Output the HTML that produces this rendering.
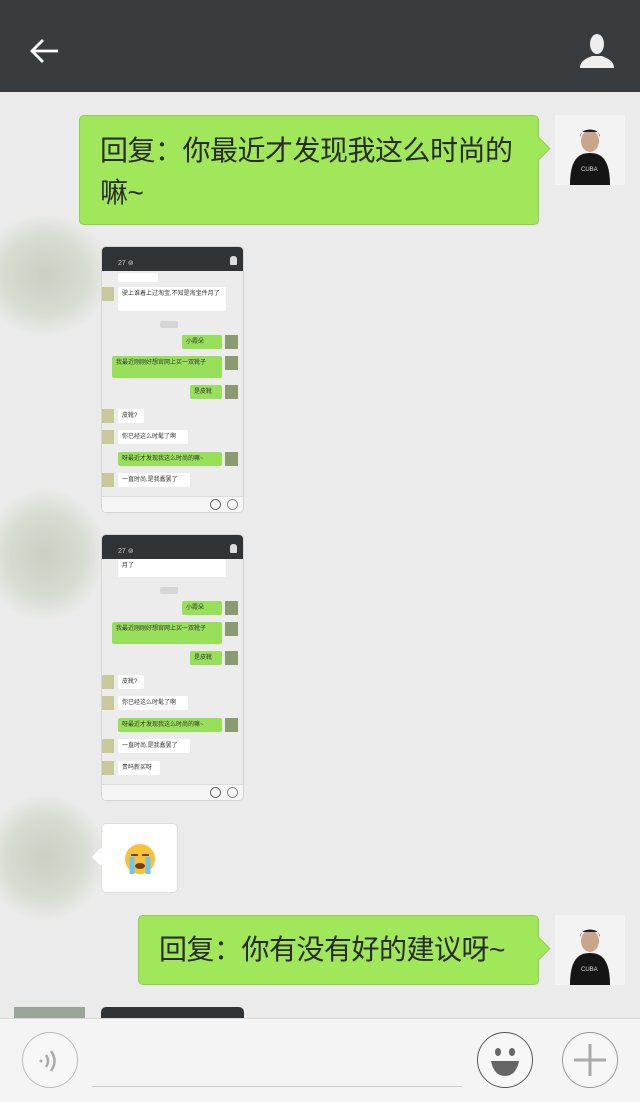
<!DOCTYPE html>
<html><head><meta charset="utf-8"><style>
*{margin:0;padding:0;box-sizing:border-box}
body{width:640px;height:1102px;overflow:hidden;background:#ebebeb;position:relative;font-family:"Liberation Sans","Noto Sans CJK SC",sans-serif}
.abs{position:absolute}
.hdr{left:0;top:0;width:640px;height:92px;background:#383c3f}
.bub{background:#a0e75a;border:1px solid #8ccf4d;border-radius:5px;color:#2a2a2a;font-size:28px;line-height:42px;letter-spacing:-0.5px}
.bub:after{content:"";position:absolute;right:-9px;top:24px;width:16px;height:16px;background:#a0e75a;border-right:1px solid #8ccf4d;border-top:1px solid #8ccf4d;transform:rotate(45deg)}
.av{width:70px;height:70px;background:#f3f3f3}
.blob{background:radial-gradient(ellipse at center,#c9d1c2 0%,#d6dcd0 45%,rgba(235,235,235,0) 72%)}
.ph{width:143px;height:267px;background:#ececec;border:1px solid #d5d5d5;border-radius:5px;overflow:hidden;font-size:6px;color:#333}
.ph .top{position:absolute;left:0;top:0;width:100%;height:24px;background:#303437}
.ph .r{position:absolute;height:14px;line-height:14px;padding:0 4px;border-radius:2px}
.ph .g{background:#98e05a}.ph .w{background:#fff}
.ph .a{position:absolute;width:13px;height:14px;background:#8c9a72}
.ph .al{position:absolute;left:0;width:12px;height:14px;background:#c7c99a}
.ph .bot{position:absolute;left:0;bottom:0;width:100%;height:16px;background:#f5f5f5;border-top:1px solid #ddd}
.circ{position:absolute;border-radius:50%;border:1.5px solid #aaa;background:#f7f7f7}
</style></head><body>
<div class="abs hdr"></div>
<svg class="abs" style="left:28px;top:37px" width="32" height="28" viewBox="0 0 32 28"><path d="M30 14H4M15 3L4 14l11 11" stroke="#fff" stroke-width="2.8" fill="none"/></svg>
<svg class="abs" style="left:578px;top:32px" width="38" height="38" viewBox="0 0 38 38"><ellipse cx="19" cy="12" rx="7" ry="10" fill="#eee"/><path d="M2 36c0-8 8-10 12-12h10c4 2 12 4 12 12z" fill="#eee"/></svg>

<div class="abs blob" style="left:-20px;top:215px;width:130px;height:120px"></div>
<div class="abs blob" style="left:-15px;top:490px;width:120px;height:130px"></div>
<div class="abs blob" style="left:-15px;top:795px;width:120px;height:125px"></div>

<div class="abs bub" style="left:79px;top:115px;width:460px;height:110px;padding:14px 12px 0 20px">回复：你最近才发现我这么时尚的<br>嘛~</div>
<div class="abs av" style="left:555px;top:115px"><svg width="70" height="70"><ellipse cx="35" cy="26" rx="9" ry="11" fill="#caa58c"/><path d="M25 22c0-10 20-10 20 0l-2-5h-16z" fill="#222"/><path d="M15 70c0-25 8-32 20-32s20 7 20 32z" fill="#151515"/><text x="26" y="56" font-size="6" fill="#ddd" font-family="Liberation Sans">CUBA</text></svg></div>

<div class="abs ph" style="left:101px;top:246px">
<div class="top"><span style="position:absolute;left:16px;top:12px;color:#ccc;font-size:7px">27 ⊚</span><span style="position:absolute;right:6px;top:9px;width:7px;height:9px;background:#ddd;border-radius:3px 3px 1px 1px"></span></div>
<div class="r w" style="left:16px;top:26px;width:40px;height:9px"></div>
<div class="al" style="top:40px"></div><div class="r w" style="left:16px;top:40px;width:108px;height:24px;line-height:11px;padding-top:2px">驶上谁着上过淘宝,不知是淘宝件月了</div>
<div class="r" style="left:58px;top:74px;width:18px;height:7px;background:#d5d5d5"></div>
<div class="a" style="left:123px;top:88px"></div><div class="r g" style="left:80px;top:88px;width:40px">小霞朵</div>
<div class="a" style="left:123px;top:109px"></div><div class="r g" style="left:10px;top:109px;width:110px;height:22px">我最近刚刚好想官网上买一双靴子</div>
<div class="a" style="left:123px;top:138px"></div><div class="r g" style="left:88px;top:138px;width:32px">是皮靴</div>
<div class="al" style="top:162px"></div><div class="r w" style="left:16px;top:162px;width:26px">皮靴?</div>
<div class="al" style="top:183px"></div><div class="r w" style="left:16px;top:183px;width:70px">你已经这么时髦了啊</div>
<div class="a" style="left:123px;top:205px"></div><div class="r g" style="left:16px;top:205px;width:104px">呀最近才发现我这么时尚的嘛~</div>
<div class="al" style="top:226px"></div><div class="r w" style="left:16px;top:226px;width:72px">一直时尚,是我蠢罢了</div>
<div class="bot"><span style="position:absolute;right:22px;top:2px;width:11px;height:11px;border:1px solid #666;border-radius:50%"></span><span style="position:absolute;right:5px;top:2px;width:11px;height:11px;border:1px solid #888;border-radius:50%"></span></div>
</div>
<div class="abs ph" style="left:101px;top:534px">
<div class="top"><span style="position:absolute;left:16px;top:12px;color:#ccc;font-size:7px">27 ⊚</span><span style="position:absolute;right:6px;top:9px;width:7px;height:9px;background:#ddd;border-radius:3px 3px 1px 1px"></span></div>
<div class="r w" style="left:16px;top:24px;width:108px;height:18px">月了</div>
<div class="r" style="left:58px;top:52px;width:18px;height:7px;background:#d5d5d5"></div>
<div class="a" style="left:123px;top:66px"></div><div class="r g" style="left:80px;top:66px;width:40px">小霞朵</div>
<div class="a" style="left:123px;top:87px"></div><div class="r g" style="left:10px;top:87px;width:110px;height:22px">我最近刚刚好想官网上买一双靴子</div>
<div class="a" style="left:123px;top:116px"></div><div class="r g" style="left:88px;top:116px;width:32px">是皮靴</div>
<div class="al" style="top:140px"></div><div class="r w" style="left:16px;top:140px;width:26px">皮靴?</div>
<div class="al" style="top:161px"></div><div class="r w" style="left:16px;top:161px;width:70px">你已经这么时髦了啊</div>
<div class="a" style="left:123px;top:183px"></div><div class="r g" style="left:16px;top:183px;width:104px">呀最近才发现我这么时尚的嘛~</div>
<div class="al" style="top:204px"></div><div class="r w" style="left:16px;top:204px;width:72px">一直时尚,是我蠢罢了</div>
<div class="al" style="top:226px"></div><div class="r w" style="left:16px;top:226px;width:42px">贵吗新买呀</div>
<div class="bot"><span style="position:absolute;right:22px;top:2px;width:11px;height:11px;border:1px solid #666;border-radius:50%"></span><span style="position:absolute;right:5px;top:2px;width:11px;height:11px;border:1px solid #888;border-radius:50%"></span></div>
</div>

<div class="abs" style="left:101px;top:823px;width:77px;height:70px;background:#fff;border:1px solid #ddd;border-radius:5px"></div>
<div class="abs" style="left:93px;top:850px;width:14px;height:14px;background:#fff;border-left:1px solid #ddd;border-bottom:1px solid #ddd;transform:rotate(45deg)"></div>
<svg class="abs" style="left:122px;top:842px" width="36" height="34" viewBox="0 0 36 34"><circle cx="18" cy="17" r="15" fill="#f5c23a"/><path d="M9 13h7M20 13h7" stroke="#6b4a10" stroke-width="2"/><path d="M10 15v17M26 15v17" stroke="#6ec6ef" stroke-width="5"/><ellipse cx="18" cy="24" rx="5" ry="3" fill="#7a3b10"/></svg>

<div class="abs bub" style="left:138px;top:915px;width:401px;height:70px;padding:13px 0 0 20px;white-space:nowrap">回复：你有没有好的建议呀~</div>
<div class="abs av" style="left:555px;top:915px"><svg width="70" height="70"><ellipse cx="35" cy="26" rx="9" ry="11" fill="#caa58c"/><path d="M25 22c0-10 20-10 20 0l-2-5h-16z" fill="#222"/><path d="M15 70c0-25 8-32 20-32s20 7 20 32z" fill="#151515"/><text x="26" y="56" font-size="6" fill="#ddd" font-family="Liberation Sans">CUBA</text></svg></div>

<div class="abs" style="left:14px;top:1007px;width:71px;height:11px;background:#9aa59a"></div>
<div class="abs" style="left:101px;top:1007px;width:143px;height:11px;background:#303437;border-radius:5px 5px 0 0"></div>

<div class="abs" style="left:0;top:1018px;width:640px;height:84px;background:#f4f4f4;border-top:1px solid #d8d8d8"></div>
<div class="circ" style="left:22px;top:1032px;width:56px;height:56px;border-color:#bbb"></div>
<svg class="abs" style="left:34px;top:1046px" width="30" height="30" viewBox="0 0 30 30"><circle cx="7" cy="15" r="1.5" fill="#aaa"/><path d="M12 9q4 6 0 12M17 5q7 10 0 20" stroke="#aaa" stroke-width="2.5" fill="none"/></svg>
<div class="abs" style="left:92px;top:1086px;width:370px;height:1px;background:#ccc"></div>
<div class="circ" style="left:477px;top:1032px;width:56px;height:56px;border-color:#555"></div>
<svg class="abs" style="left:477px;top:1032px" width="56" height="56" viewBox="0 0 56 56"><ellipse cx="21" cy="20" rx="3" ry="4" fill="#666"/><ellipse cx="35" cy="20" rx="3" ry="4" fill="#666"/><path d="M14 29h28q-3 15-14 15t-14-15z" fill="#666"/></svg>
<div class="circ" style="left:562px;top:1032px;width:56px;height:56px;border-color:#999"></div>
<svg class="abs" style="left:562px;top:1032px" width="56" height="56" viewBox="0 0 56 56"><path d="M28 12v32M12 28h32" stroke="#aaa" stroke-width="3"/></svg>
</body></html>
